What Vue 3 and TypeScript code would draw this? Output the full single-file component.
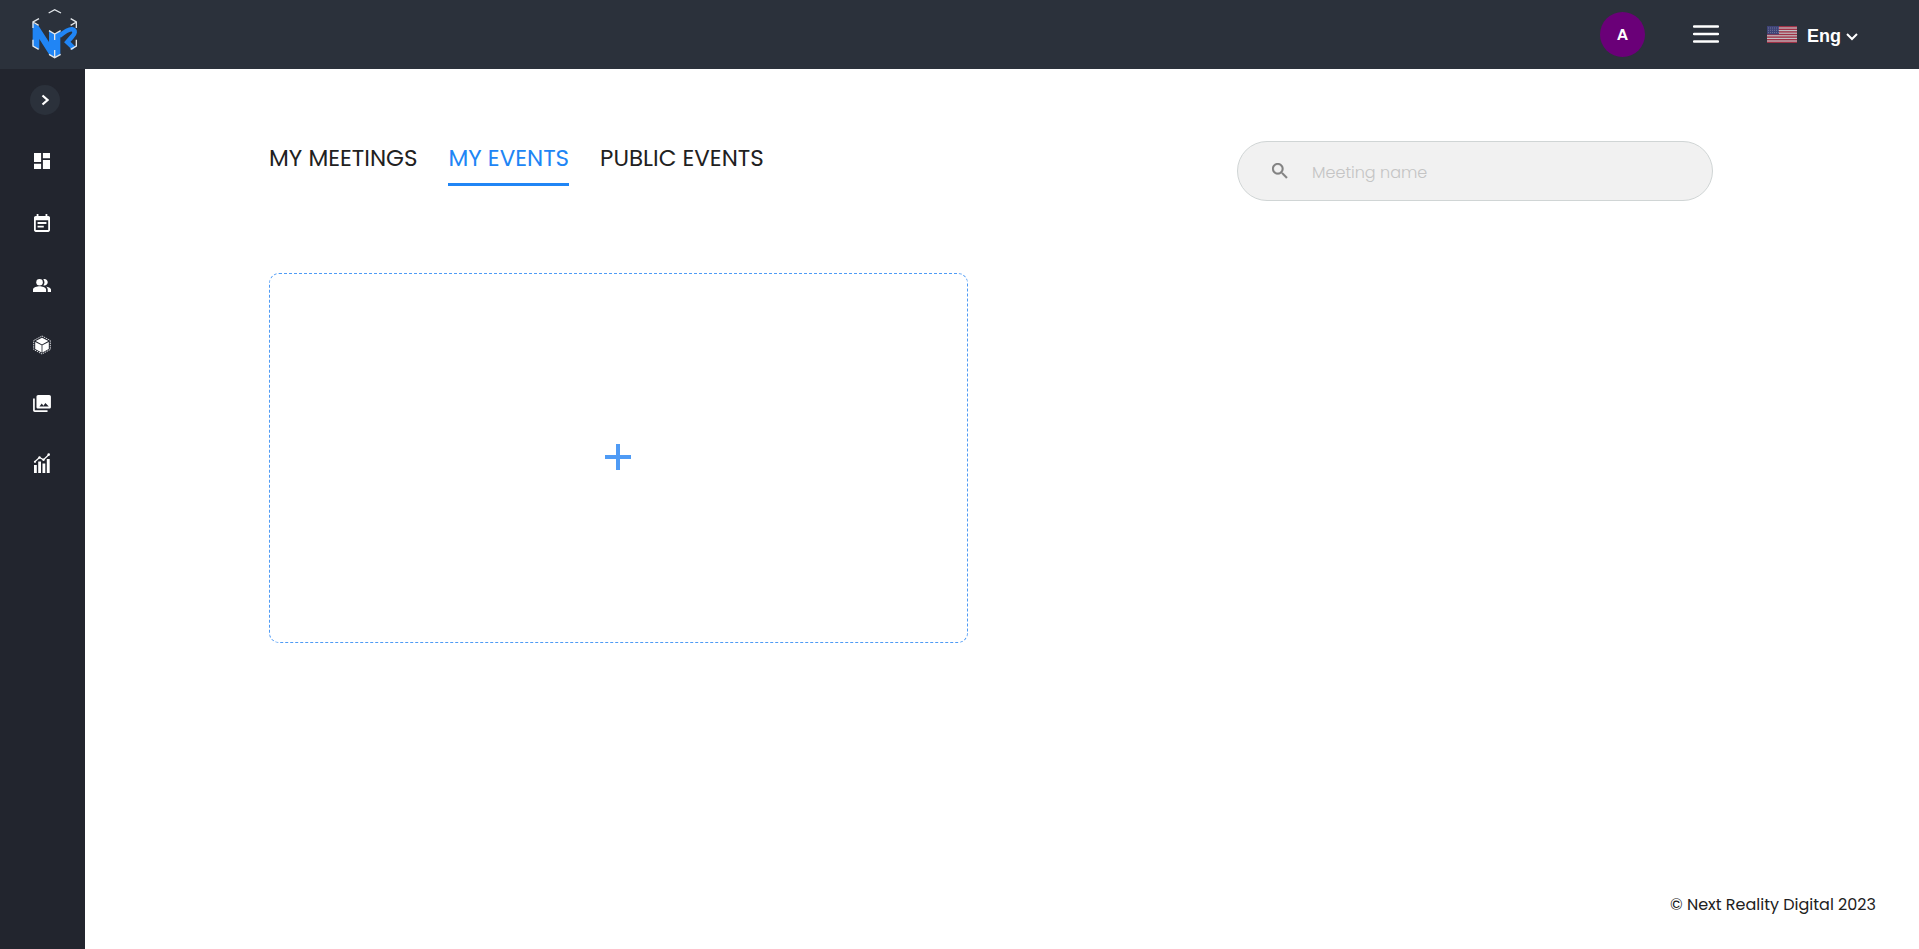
<script setup lang="ts">
import { ref } from 'vue'

interface Tab {
  id: string
  label: string
}

const tabs: Tab[] = [
  { id: 'meetings', label: 'MY MEETINGS' },
  { id: 'events', label: 'MY EVENTS' },
  { id: 'public', label: 'PUBLIC EVENTS' },
]
const active = ref('events')
const query = ref('')
const stripes = [0, 1, 2, 3, 4, 5, 6]
</script>

<template>
  <div class="page">
    <header class="topbar">
      <a class="logo" href="#" aria-label="Next Reality">
        <svg viewBox="93 24 144 153" width="48" height="51" fill="none">
          <path fill="#2085f5" d="M98 68l18 10 31 48V92l17 10 17-9v70l-17 9-17-9-29-46v31l-20-11z" />
          <path stroke="#2085f5" stroke-width="14" d="M178 108c15-12 29-22 38-20 12 3 9 14 0 22l-14 16 20 19" />
          <g stroke="#e2e6ea" stroke-width="4">
            <path d="M146 39l18-10 19 10M117 56l-18 10v18M99 66l17 10M212 56l17 10v18M229 66l-17 10M99 119v19l17 10M229 119v19l-17 10M147 92l17 10 18-10M164 102v18M164 150v22M147 163l17 10 18-10" />
          </g>
        </svg>
      </a>
      <div class="tools">
        <button class="avatar" type="button">A</button>
        <button class="burger" type="button" aria-label="Menu">
          <svg viewBox="0 0 26 20" width="26" height="20" stroke="#fff" stroke-width="2.4" stroke-linecap="round">
            <path d="M1 2.500h24M1 10h24M1 17.500h24" />
          </svg>
        </button>
        <button class="lang" type="button">
          <svg class="flag" viewBox="0 0 30 17" width="30" height="17">
            <rect width="30" height="17" fill="#f4eef2" />
            <rect v-for="s in stripes" :key="s" :y="s * 2.6" width="30" height="1.4" fill="#c8324a" />
            <rect width="12" height="8.4" fill="#454a8c" />
            <path d="M1 2h11M1 4.300h11M1 6.600h11" stroke="#9a9dc4" stroke-width=".8" stroke-dasharray="1 1" />
          </svg>
          <span>Eng</span>
          <svg class="chev" viewBox="0 0 12 8" width="12" height="8" fill="none" stroke="#fff" stroke-width="2">
            <path d="M1 1l5 5 5-5" />
          </svg>
        </button>
      </div>
    </header>

    <div class="body">
      <nav class="side" aria-label="Main">
        <button class="expand" type="button" aria-label="Expand">
          <svg viewBox="0 0 8 12" width="8" height="12" fill="none" stroke="#fff" stroke-width="2.2">
            <path d="M1.500 1.500l5 4.500-5 4.500" />
          </svg>
        </button>
        <a class="item" href="#" aria-label="Dashboard">
          <svg viewBox="3 3 18 18" width="16" height="16" fill="#fff">
            <path d="M3 13h8V3H3v10zm0 8h8v-6H3v6zm10 0h8V11h-8v10zm0-18v6h8V3h-8z" />
          </svg>
        </a>
        <a class="item" href="#" aria-label="Calendar">
          <svg viewBox="3 1 18 20" width="16" height="18" fill="#fff">
            <path d="M17 10H7v2h10v-2zm2-7h-1V1h-2v2H8V1H6v2H5c-1.100 0-2 .9-2 2v14c0 1.100.9 2 2 2h14c1.100 0 2-.9 2-2V5c0-1.100-.9-2-2-2zm0 16H5V8h14v11zm-5-5H7v2h7v-2z" />
          </svg>
        </a>
        <a class="item" href="#" aria-label="Contacts">
          <svg viewBox="1 3 22 18" width="18" height="15" fill="#fff">
            <path d="M16.670 13.130C18.040 14.060 19 15.320 19 17v3h4v-3c0-2.180-3.570-3.470-6.330-3.870z" />
            <circle cx="9" cy="8" r="4" />
            <path d="M15 12c2.210 0 4-1.790 4-4s-1.790-4-4-4c-.470 0-.910.100-1.330.240C14.500 5.270 15 6.580 15 8s-.5 2.730-1.330 3.760c.420.140.860.240 1.330.240zM9 13c-2.670 0-8 1.340-8 4v3h16v-3c0-2.660-5.330-4-8-4z" />
          </svg>
        </a>
        <a class="item short" href="#" aria-label="Models">
          <svg viewBox="0 0 18 20" width="18" height="20">
            <path d="M9 1l8.300 4.500v9L9 19 .7 14.500v-9z" fill="none" stroke="#d6d8dc" stroke-width="1" stroke-dasharray="1.500 .8" />
            <path d="M9 2.800l6.300 3.300L9 9.400 2.700 6.100zM2.200 7l6.400 3.300v7.200l-6.400-3.400zM15.800 7L9.400 10.300v7.200l6.400-3.400z" fill="#fff" />
          </svg>
        </a>
        <a class="item short" href="#" aria-label="Gallery">
          <svg viewBox="1 2 21 20" width="18" height="17" fill="#fff">
            <path d="M22 16V4c0-1.100-.9-2-2-2H7c-1.100 0-2 .9-2 2v12c0 1.100.9 2 2 2h13c1.100 0 2-.9 2-2zM8.500 15.500l2.700-3.500 2 2.500 2.300-3 4 4zM1 6v14c0 1.100.9 2 2 2h15v-2H3V6H1z" />
          </svg>
        </a>
        <a class="item" href="#" aria-label="Statistics">
          <svg viewBox="0 0 18 20" width="18" height="20">
            <path d="M1 12h2.800v8H1zM5.200 8.500H8V20H5.200zM9.500 10.500h2.800V20H9.500zM13.800 6h2.900v14h-2.900z" fill="#fff" />
            <path d="M1.500 9l5-4.500 4 2.300L16 1.500" fill="none" stroke="#fff" stroke-width="1.200" />
            <circle cx="2" cy="8.800" r="1.100" fill="#fff" />
            <circle cx="6.500" cy="4.500" r="1.200" fill="#fff" />
            <circle cx="10.500" cy="6.800" r="1.200" fill="#fff" />
            <circle cx="15.700" cy="1.600" r="1.300" fill="#fff" />
          </svg>
        </a>
      </nav>

      <main class="main">
        <div class="bar">
          <div class="tabs" role="tablist">
            <button
              v-for="t in tabs"
              :key="t.id"
              type="button"
              role="tab"
              class="tab"
              :class="{ on: active === t.id }"
              :aria-selected="active === t.id"
              @click="active = t.id"
            >{{ t.label }}</button>
          </div>
          <label class="search">
            <svg viewBox="3 3 18 18" width="16" height="16" fill="#828282" stroke="#828282" stroke-width=".3">
              <path d="M15.500 14h-.790l-.280-.270C15.410 12.590 16 11.110 16 9.500 16 5.910 13.090 3 9.500 3S3 5.910 3 9.500 5.910 16 9.500 16c1.610 0 3.090-.590 4.230-1.570l.270.280v.790l5 4.990L20.490 19l-4.990-5zm-6 0C7.010 14 5 11.990 5 9.500S7.010 5 9.500 5 14 7.010 14 9.500 11.990 14 9.500 14z" />
            </svg>
            <input v-model="query" type="text" placeholder="Meeting name" aria-label="Meeting name" />
          </label>
        </div>

        <div class="cards">
          <button class="add" type="button" aria-label="Add event">
            <svg viewBox="0 0 26 26" width="26" height="26" stroke="#4f9bf5" stroke-width="4">
              <path d="M13 0v26M0 13h26" />
            </svg>
          </button>
        </div>

        <footer class="foot">© Next Reality Digital 2023</footer>
      </main>
    </div>
  </div>
</template>

<style>
body {
  margin: 0;
}
</style>

<style scoped>
.page {
  min-height: 100vh;
  display: flex;
  flex-direction: column;
  background: #fff;
  color: #212121;
  font-family: Poppins, Lato, "Open Sans", sans-serif;
}
button {
  border: 0;
  padding: 0;
  background: none;
  color: inherit;
  font: inherit;
  cursor: pointer;
}
svg {
  display: block;
  flex: none;
}
.topbar {
  box-sizing: border-box;
  height: 69px;
  padding: 0 61px 2px 31px;
  display: flex;
  align-items: center;
  justify-content: space-between;
  background: #2b313b;
}
.tools {
  display: flex;
  align-items: center;
}
.avatar {
  width: 45px;
  height: 45px;
  margin: 2px 48px 0 0;
  border-radius: 50%;
  background: #6a0078;
  color: #fff;
  font-size: 16px;
  font-weight: 600;
}
.burger {
  margin-right: 48px;
}
.lang {
  margin-top: 2px;
  display: flex;
  align-items: center;
  color: #fff;
  font: 700 18px/24px "Liberation Sans", Arial, sans-serif;
}
.lang span {
  margin: 2px 5px 0 10px;
}
.flag {
  opacity: 0.75;
}
.chev {
  margin-top: 4px;
}
.body {
  flex: 1;
  display: flex;
}
.side {
  width: 85px;
  flex: none;
  display: flex;
  flex-direction: column;
  align-items: center;
  background: #22252e;
}
.expand {
  width: 30px;
  height: 30px;
  margin: 16px 0 15px 5px;
  display: grid;
  place-items: center;
  border-radius: 50%;
  background: #2b313b;
}
.item {
  width: 84px;
  height: 62px;
  margin-right: 1px;
  display: grid;
  place-items: center;
}
.item.short {
  height: 58px;
}
.main {
  flex: 1;
  min-width: 0;
  display: flex;
  flex-direction: column;
  padding: 72px 43px 25px 184px;
}
.bar,
.cards {
  margin-right: 163px;
}
.bar {
  display: flex;
  align-items: flex-start;
  justify-content: space-between;
}
.tabs {
  display: flex;
  gap: 31px;
}
.tab {
  height: 45px;
  padding-bottom: 8px;
  border-bottom: 3px solid transparent;
  font-size: 23px;
  line-height: 34px;
  white-space: nowrap;
}
.tab.on {
  color: #2085f5;
  border-color: #2085f5;
}
.search {
  box-sizing: border-box;
  flex: 0 1 476px;
  height: 60px;
  padding: 0 34px;
  display: flex;
  align-items: center;
  gap: 24px;
  border: 1px solid #d0d5d5;
  border-radius: 30px;
  background: #f1f1f1;
}
.search input {
  flex: 1;
  min-width: 0;
  padding: 4px 0 0;
  border: 0;
  outline: 0;
  background: none;
  color: #212121;
  font: 300 16px/24px Poppins, Lato, "Open Sans", sans-serif;
}
.search input::placeholder {
  color: #c4c4c4;
  opacity: 1;
}
.cards {
  margin-top: 72px;
  display: grid;
  grid-template-columns: 1fr 1fr;
  gap: 46px;
}
.add {
  height: 370px;
  padding: 0 2px 2px 0;
  display: grid;
  place-items: center;
  border: 1px dashed #4f9bf5;
  border-radius: 10px;
}
.foot {
  margin-top: auto;
  text-align: right;
  font-size: 16px;
  line-height: 38px;
}
</style>
